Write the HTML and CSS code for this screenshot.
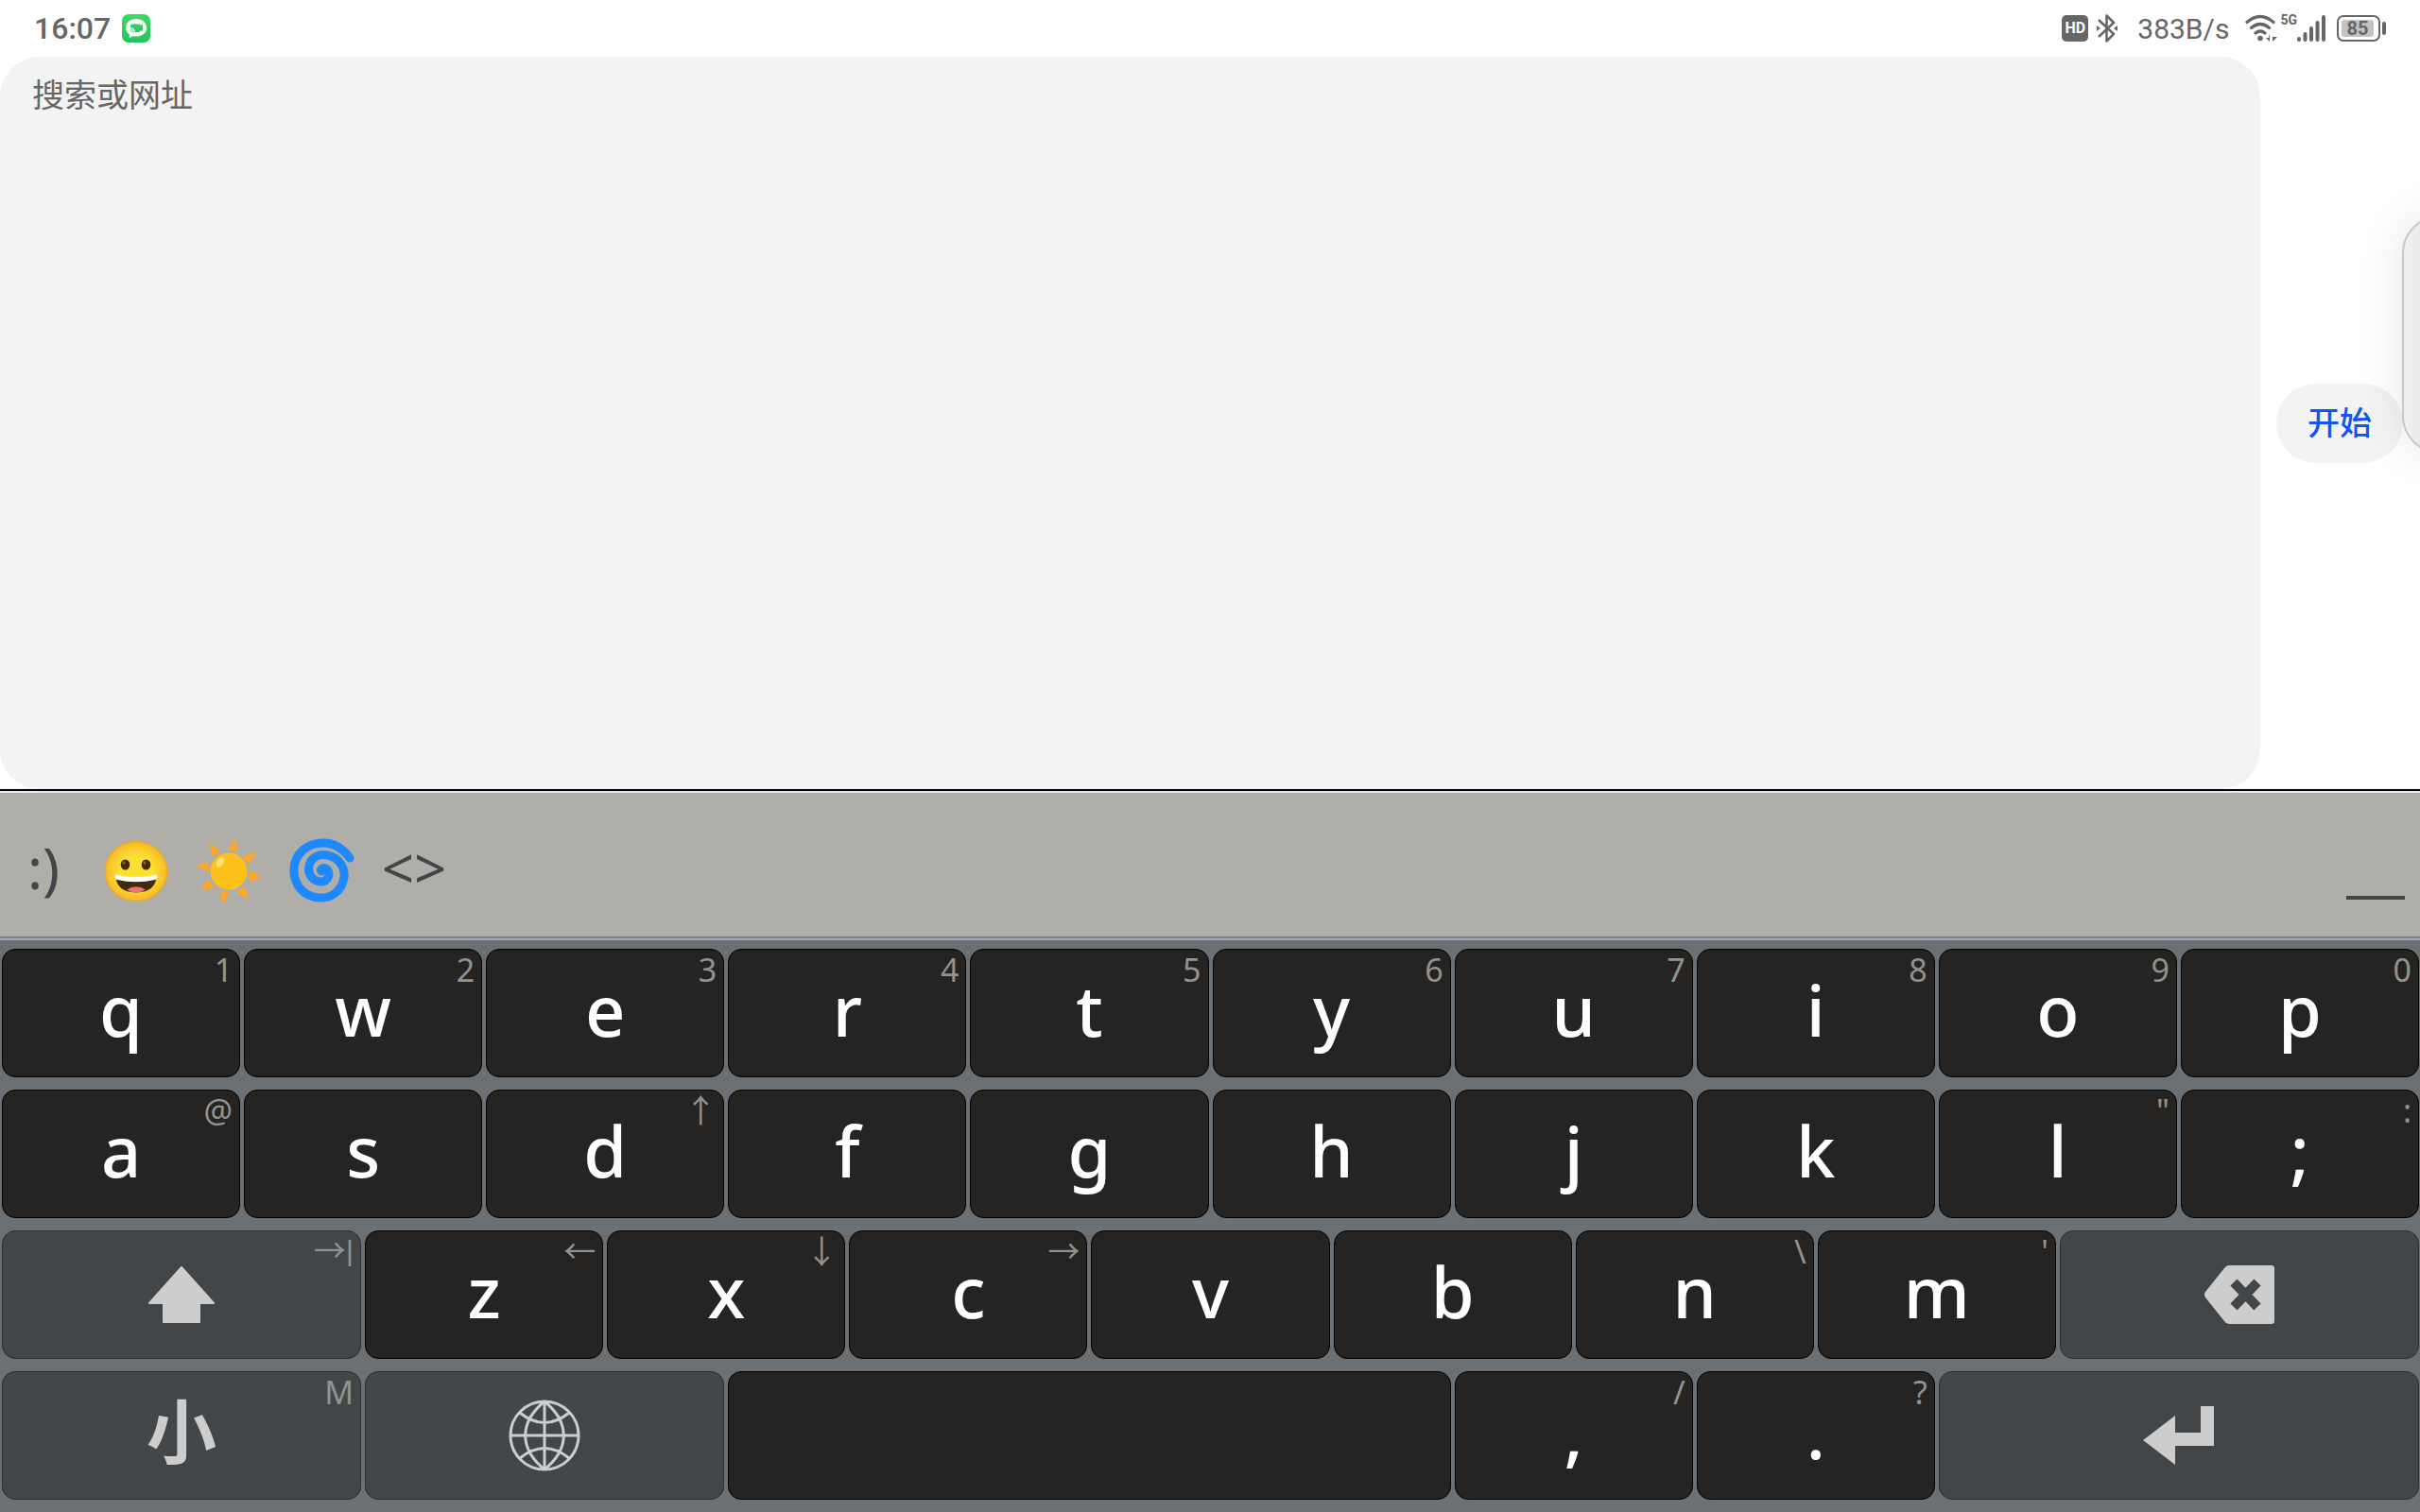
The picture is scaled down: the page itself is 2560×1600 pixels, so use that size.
FILE: index.html
```html
<!DOCTYPE html>
<html lang="zh-CN">
<head>
    <meta charset="UTF-8">
    <meta name="viewport" content="width=device-width, initial-scale=1.0">
    <title>搜索或网址</title>
    <link rel="stylesheet" href="styles.css">
</head>
<body>

<!-- Status bar -->
<header class="status-bar">
    <div class="status-left">
        <span class="time">16:07</span>
        <svg width="30" height="30" viewBox="0 0 30 30">
            <defs>
                <linearGradient id="appGreen" x1="0" y1="0" x2="0" y2="1">
                    <stop offset="0" stop-color="#3fd867"/>
                    <stop offset="1" stop-color="#22c45c"/>
                </linearGradient>
            </defs>
            <rect width="30" height="30" rx="7" fill="url(#appGreen)"/>
            <path d="M15 5C9 5 4 9 4 14.500c0 3 1.500 5.500 4 7.200L7.500 25l4.500-1.700c1 .2 2 .3 3 .3 6.500 0 11.200-4 11.200-9.100S21.500 5 15 5z" fill="#fff"/>
            <path d="M9 12q0-1.500 1.500-1.500h7.500q1.500 0 1.500 1.200l2.500-.8v7.200l-2.500-.8q0 1.700-1.500 1.700h-4q-.500-4.500-5-5z" fill="#2ecb62"/>
            <path d="M9 15.500q3 .3 3.500 3.500M9 17.500q1.300.2 1.500 1.500" fill="none" stroke="#2ecb62" stroke-width="1"/>
        </svg>
    </div>
    <div class="status-right">
        <span class="hd">HD</span>
        <svg class="bluetooth" width="24" height="32" viewBox="0 0 24 32" fill="none" stroke="#666" stroke-width="2.500" stroke-linejoin="round">
            <path d="M3 7l16 15-7.500 7.500V2.500l7.500 7.500L3 25"/>
            <path d="M1 13l4 3-4 3zM23 13l-4 3 4 3z" fill="#666" stroke="none"/>
        </svg>
        <span class="speed">383B/s</span>
        <svg class="wifi" width="34" height="30" viewBox="0 0 34 30" fill="none" stroke="#666" stroke-width="3.200" stroke-linecap="round">
            <path d="M2 8.500q14-12 28 0M6.500 14.500q9.500-8 19 0M11 20q5-4 10 0"/>
            <circle cx="16" cy="25.500" r="2.800" fill="#666" stroke="none"/>
            <path d="M26 20v9l-4-4h3zM29 20v9l5-5h-5z" fill="#666" stroke="none"/>
        </svg>
        <span class="network">5G</span>
        <svg class="signal" width="30" height="28" viewBox="0 0 30 28" stroke="#666" stroke-width="4" stroke-linecap="round">
            <path d="M2 25v1M8.500 20v6M15 14v12M21.500 8v18M28 2v24"/>
        </svg>
        <div class="battery"><span class="battery-level">85</span></div>
    </div>
</header>

<!-- Address field -->
<main class="browser">
    <textarea class="address" aria-label="搜索或网址" placeholder="搜索或网址"></textarea>
    <button class="go">开始</button>
    <div class="side-panel"></div>
</main>

<!-- Candidate bar -->
<nav class="toolbar">
    <button class="tool text-tool">:)</button>
    <button class="tool" aria-label="表情">
        <svg width="70" height="70" viewBox="0 0 70 70">
            <defs>
                <radialGradient id="face" cx=".5" cy=".5" r=".5">
                    <stop offset=".5" stop-color="#fde030"/>
                    <stop offset=".92" stop-color="#f7c02b"/>
                    <stop offset="1" stop-color="#f0a21b"/>
                </radialGradient>
            </defs>
            <ellipse cx="35" cy="35" rx="33.500" ry="32" fill="url(#face)"/>
            <ellipse cx="23.500" cy="28" rx="4.800" ry="5.600" fill="#422b0d"/>
            <ellipse cx="45.500" cy="28" rx="4.800" ry="5.600" fill="#422b0d"/>
            <ellipse cx="22" cy="26" rx="1.500" ry="1.700" fill="#896024"/>
            <ellipse cx="44" cy="26" rx="1.500" ry="1.700" fill="#896024"/>
            <path d="M13.500 40Q35 47 56.500 40Q56 57 35 57.500Q14 57 13.500 40z" fill="#422b0d"/>
            <path d="M25 54.500q10-6.500 20 0q-10 6-20 0z" fill="#ed7770"/>
            <path d="M13 38.500q22 5 44 0q1 4.500-2 5.500q-20 4.500-40 0q-3-1-2-5.500z" fill="#fff"/>
        </svg>
    </button>
    <button class="tool" aria-label="天气">
        <svg width="70" height="70" viewBox="0 0 70 70">
            <g fill="#ffa726" stroke="#ffa726" stroke-linejoin="round">
                <path d="M41 1l3 13-9-2zM64 15l-8 12-6-7zM69 41l-12 4 1-11zM55 64l-11-7 8-6zM29 69l-3-13 9 2zM6 55l7-11 6 8zM1 29l12-3 1 9zM15 6l11 8-8 5z"/>
            </g>
            <circle cx="35" cy="35" r="19.500" fill="#fcc21b"/>
            <ellipse cx="26" cy="25.500" rx="3.500" ry="6" transform="rotate(33 26 25.500)" fill="#ffe36c"/>
        </svg>
    </button>
    <button class="tool" aria-label="符号">
        <svg width="70" height="70" viewBox="0 0 70 70" fill="none" stroke="#1e88ff" stroke-linecap="round">
            <path d="M35 35c-2-3 3-5 6-2c4 4 1 13-6 13c-9 0-15-8-13-17c2-9 11-13 19-11c12 2 19 12 18 23c-2 14-13 23-26 22c-17-1-28-14-27-31C7 16 20 5 37 5c12 0 21 6 28 16" stroke-width="9"/>
        </svg>
    </button>
    <button class="tool text-tool">&lt;&gt;</button>
    <button class="tool hide-keys" aria-label="收起键盘">
        <svg width="62" height="70" viewBox="0 0 62 70"><path d="M0 63h62" stroke="#434648" stroke-width="4"/></svg>
    </button>
</nav>

<!-- Keyboard -->
<section class="keyboard">
    <button class="key">q<span class="hint">1</span></button>
    <button class="key">w<span class="hint">2</span></button>
    <button class="key">e<span class="hint">3</span></button>
    <button class="key">r<span class="hint">4</span></button>
    <button class="key">t<span class="hint">5</span></button>
    <button class="key">y<span class="hint">6</span></button>
    <button class="key">u<span class="hint">7</span></button>
    <button class="key">i<span class="hint">8</span></button>
    <button class="key">o<span class="hint">9</span></button>
    <button class="key">p<span class="hint">0</span></button>

    <button class="key">a<span class="hint">@</span></button>
    <button class="key">s</button>
    <button class="key">d<span class="hint">↑</span></button>
    <button class="key">f</button>
    <button class="key">g</button>
    <button class="key">h</button>
    <button class="key">j</button>
    <button class="key">k</button>
    <button class="key">l<span class="hint">"</span></button>
    <button class="key">;<span class="hint">:</span></button>

    <button class="key fn icon wide" aria-label="Shift">
        <svg width="70" height="60" viewBox="0 0 70 60" fill="#cdcdcd" stroke="#cdcdcd" stroke-width="2" stroke-linejoin="round">
            <path d="M35 1L69 39H54V59H16V39H1z"/>
        </svg>
        <span class="hint tab">→|</span>
    </button>
    <button class="key">z<span class="hint">←</span></button>
    <button class="key">x<span class="hint">↓</span></button>
    <button class="key">c<span class="hint">→</span></button>
    <button class="key">v</button>
    <button class="key">b</button>
    <button class="key">n<span class="hint">\</span></button>
    <button class="key">m<span class="hint">'</span></button>
    <button class="key fn icon wide" aria-label="Backspace">
        <svg width="76" height="64" viewBox="0 0 76 64">
            <path d="M27 1H72q3 0 3 3V60q0 3-3 3H27q-3 0-5-3L2 35q-2-3 0-6L22 4q2-3 5-3z" fill="#cdcdcd"/>
            <path d="M32 19L57 45M57 19L32 45" stroke="#434648" stroke-width="10"/>
        </svg>
    </button>

    <button class="key fn wide mode">小<span class="hint">M</span></button>
    <button class="key fn icon wide" aria-label="Language">
        <svg width="76" height="76" viewBox="0 0 76 76" fill="none" stroke="#cdcdcd" stroke-width="3">
            <circle cx="38" cy="38" r="36"/>
            <path d="M38 2v72M2 38h72M12 14q26 21 52 0M12 62q26-21 52 0"/>
            <path d="M38 2C11 24 11 52 38 74M38 2C65 24 65 52 38 74"/>
        </svg>
    </button>
    <button class="key space" aria-label="Space"></button>
    <button class="key">,<span class="hint">/</span></button>
    <button class="key">.<span class="hint">?</span></button>
    <button class="key fn icon enter" aria-label="Enter">
        <svg width="76" height="62" viewBox="0 0 76 62" fill="#cdcdcd">
            <path d="M61 0H75V42H34V62L0 36L34 10V28H61z"/>
        </svg>
    </button>
</section>

</body>
</html>
```
FILE: styles.css
```css
* {
    margin: 0;
    padding: 0;
    box-sizing: border-box;
}
body {
    font-family: "Noto Sans", "Noto Sans CJK SC", sans-serif;
    background-color: #fff;
    display: flex;
    flex-direction: column;
    min-height: 100vh;
    overflow-x: hidden;
}
button {
    border: none;
    font-family: inherit;
    cursor: pointer;
}
svg {
    display: block;
}

/* Status bar */
.status-bar {
    display: flex;
    justify-content: space-between;
    align-items: center;
    height: 60px;
    padding: 0 36px;
    color: #666;
    font-family: Roboto, sans-serif;
}
.status-left,
.status-right {
    display: flex;
    align-items: center;
}
.time {
    font-size: 32px;
    font-weight: 500;
    margin-right: 12px;
}
.hd {
    width: 28px;
    height: 28px;
    border-radius: 5px;
    background-color: #666;
    color: #fff;
    font-size: 16px;
    font-weight: bold;
    line-height: 28px;
    text-align: center;
}
.bluetooth {
    margin: 0 20px 0 8px;
}
.speed {
    font-size: 30px;
    margin-right: 17px;
}
.network {
    align-self: flex-start;
    font-size: 14px;
    font-weight: bold;
    line-height: 16px;
    margin-left: 3px;
}
.battery {
    position: relative;
    width: 46px;
    height: 28px;
    margin: 0 6px 0 12px;
    padding: 3px;
    border: 2px solid #666;
    border-radius: 7px;
}
.battery::after {
    content: "";
    position: absolute;
    top: 5px;
    right: -8px;
    width: 4px;
    height: 14px;
    border-radius: 2px;
    background-color: #666;
}
.battery-level {
    display: block;
    width: 34px;
    border-radius: 3px;
    background-color: #c3c3c3;
    font-size: 20px;
    font-weight: bold;
    line-height: 18px;
    text-align: center;
}

/* Address field */
.browser {
    position: relative;
    flex: 1;
    display: flex;
    align-items: center;
    padding-right: 18px;
    overflow: hidden;
}
.address {
    flex: 1;
    align-self: stretch;
    padding: 14px 34px;
    border: none;
    border-radius: 42px;
    outline: none;
    resize: none;
    background-color: #f3f3f3;
    color: #333;
    font-family: "Noto Sans CJK SC", sans-serif;
    font-size: 34px;
}
.address::placeholder {
    color: #666;
}
.go {
    height: 84px;
    margin-left: 17px;
    padding: 0 33px 4px;
    border-radius: 42px;
    background-color: #f3f3f3;
    color: #1256eb;
    font-family: "Noto Sans CJK SC", sans-serif;
    font-size: 34px;
    font-weight: 500;
}
.side-panel {
    position: absolute;
    top: 168px;
    right: -61px;
    width: 80px;
    height: 252px;
    border: 2px solid #c8c8c8;
    border-radius: 40px;
    background: linear-gradient(to right, #f0f0f0, #e8e8e8 30px);
    box-shadow: 0 0 50px rgba(0, 0, 0, 0.1);
}

/* Candidate bar */
.toolbar {
    display: flex;
    align-items: center;
    gap: 28px;
    height: 160px;
    padding: 14px 16px 0 11px;
    border-top: 2px solid #000;
    border-bottom: 2px solid #a3a5b0;
    background-color: #afaea9;
    box-shadow: inset 0 2px #e6e8f6, inset 0 -2px #7f8090;
}
.tool {
    min-width: 70px;
    background: none;
    color: #434648;
    font-size: 60px;
    line-height: 70px;
}
.text-tool {
    padding-bottom: 8px;
}
.hide-keys {
    margin-left: auto;
}
.hide-keys svg {
    margin-left: auto;
}

/* Keyboard */
.keyboard {
    display: grid;
    grid-template-columns: repeat(20, 1fr);
    grid-auto-rows: 136px;
    gap: 13px 4px;
    padding: 9px 1px 13px 2px;
    background-color: #6b7074;
}
.key {
    position: relative;
    grid-column: span 2;
    display: flex;
    justify-content: center;
    align-items: center;
    padding-bottom: 6px;
    border: 1px solid #000;
    border-radius: 14px;
    background-color: #252422;
    color: #fff;
    font-size: 74px;
    font-weight: 500;
    line-height: 100px;
}
.wide {
    grid-column: span 3;
}
.space {
    grid-column: span 6;
}
.enter {
    grid-column: span 4;
}
.fn {
    border-color: #2b2e30;
    background-color: #434648;
    color: #cdcdcd;
}
.icon {
    padding-bottom: 0;
}
.mode {
    padding-bottom: 8px;
    font-weight: 700;
}
.hint {
    position: absolute;
    top: 2px;
    right: 7px;
    color: #929291;
    font-size: 34px;
    font-weight: 400;
    line-height: 38px;
}
.tab {
    font-family: Roboto, "Noto Sans", "Noto Sans CJK SC", sans-serif;
}
```
